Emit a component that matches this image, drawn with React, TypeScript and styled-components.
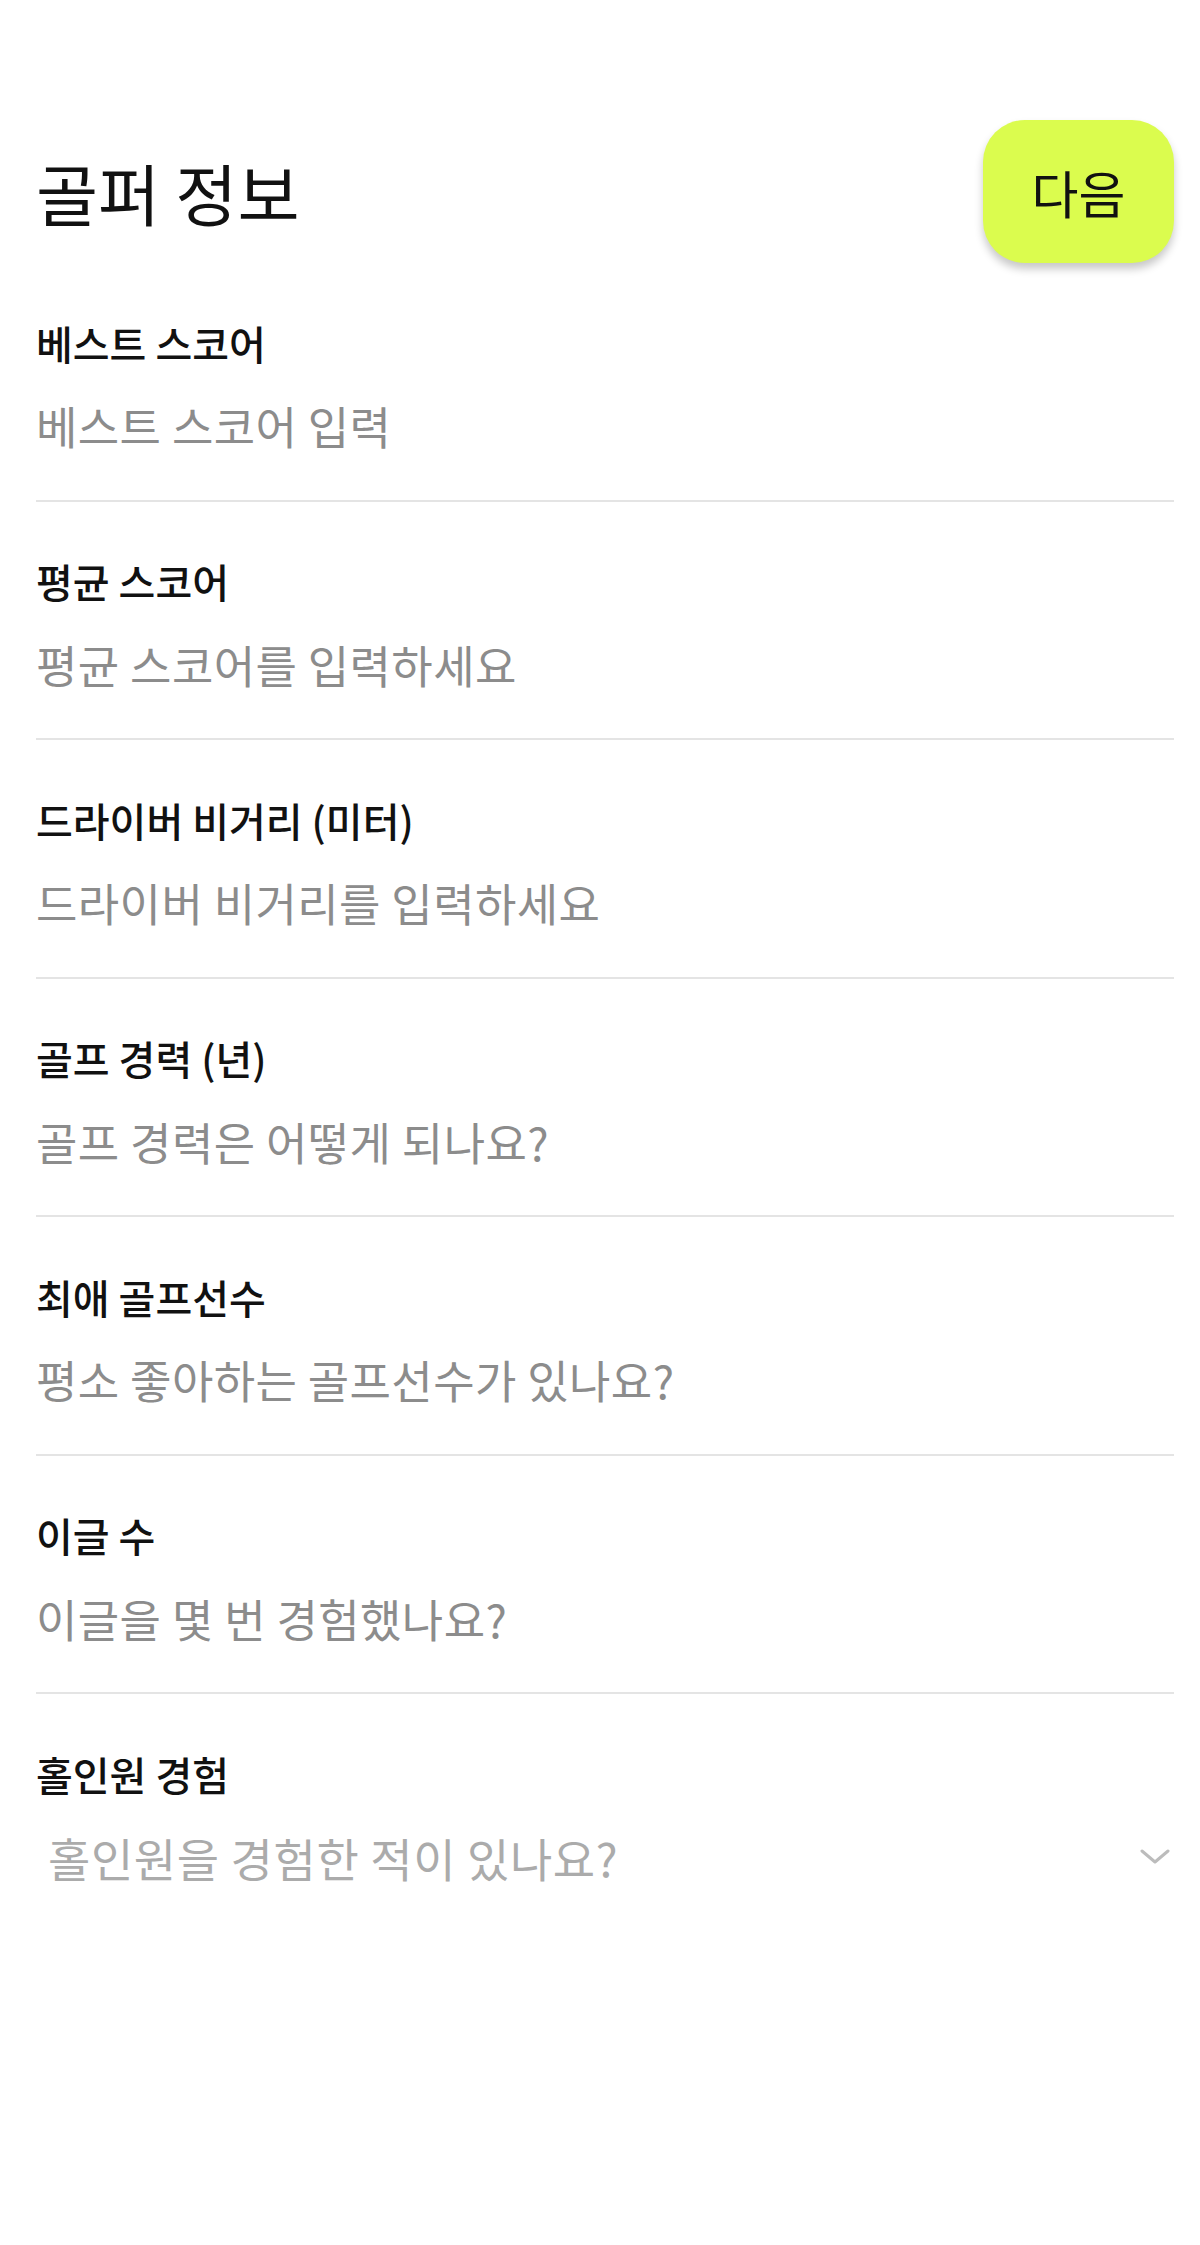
import React from "react";
import styled, { createGlobalStyle } from "styled-components";

const GlobalStyle = createGlobalStyle`
  html, body {
    margin: 0;
    padding: 0;
    background: #ffffff;
  }
  body {
    font-family: "Noto Sans CJK KR", "Noto Sans", sans-serif;
    color: #111111;
  }
  * { box-sizing: border-box; }
`;

const Page = styled.div`
  width: 1200px;
  min-height: 2245px;
  padding: 120px 26px 0 36px;
  background: #ffffff;
`;

const Header = styled.header`
  display: flex;
  align-items: center;
  justify-content: space-between;
  height: 143px;
`;

const Title = styled.h1`
  margin: 0;
  font-size: 67.5px;
  font-weight: 400;
  line-height: 1.2;
  color: #111111;
`;

const NextButton = styled.button`
  width: 191px;
  height: 143px;
  border: none;
  border-radius: 42px;
  background: #dbfc4e;
  box-shadow: 0 6px 9px rgba(0, 0, 0, 0.22);
  font-family: inherit;
  font-size: 51px;
  font-weight: 400;
  color: #111111;
  cursor: pointer;
`;

const Form = styled.form`
  display: flex;
  flex-direction: column;
`;

const Field = styled.div<{ $last?: boolean }>`
  display: flex;
  flex-direction: column;
  gap: 14px;
  padding: 52.5px 0 ${(p) => (p.$last ? "0" : "32px")};
  border-bottom: ${(p) => (p.$last ? "none" : "2px solid #e4e4e4")};
`;

const Label = styled.label`
  display: block;
  height: 54px;
  line-height: 54px;
  font-size: 40px;
  font-weight: 500;
  color: #111111;
`;

const TextInput = styled.input`
  display: block;
  width: 100%;
  height: 84px;
  padding: 0;
  border: none;
  outline: none;
  background: transparent;
  font-family: inherit;
  font-size: 45px;
  letter-spacing: 0.4px;
  color: #111111;
  &::placeholder {
    color: #8c8c8c;
  }
`;

const SelectBox = styled.div`
  display: flex;
  align-items: center;
  justify-content: space-between;
  height: 84px;
  padding: 0 4px 0 12px;
  cursor: pointer;
`;

const SelectPlaceholder = styled.span`
  font-size: 46px;
  letter-spacing: 0.6px;
  color: #ababab;
`;

const Chevron = styled.svg`
  width: 30px;
  height: 16px;
  flex: none;
`;

const fields = [
  { label: "베스트 스코어", placeholder: "베스트 스코어 입력" },
  { label: "평균 스코어", placeholder: "평균 스코어를 입력하세요" },
  { label: "드라이버 비거리 (미터)", placeholder: "드라이버 비거리를 입력하세요" },
  { label: "골프 경력 (년)", placeholder: "골프 경력은 어떻게 되나요?" },
  { label: "최애 골프선수", placeholder: "평소 좋아하는 골프선수가 있나요?" },
  { label: "이글 수", placeholder: "이글을 몇 번 경험했나요?" },
];

export default function App() {
  return (
    <>
      <GlobalStyle />
      <Page>
        <Header>
          <Title>골퍼 정보</Title>
          <NextButton type="button">다음</NextButton>
        </Header>
        <Form onSubmit={(e) => e.preventDefault()}>
          {fields.map((f, i) => (
            <Field key={i}>
              <Label htmlFor={`f${i}`}>{f.label}</Label>
              <TextInput id={`f${i}`} placeholder={f.placeholder} />
            </Field>
          ))}
          <Field $last>
            <Label>홀인원 경험</Label>
            <SelectBox role="button">
              <SelectPlaceholder>홀인원을 경험한 적이 있나요?</SelectPlaceholder>
              <Chevron viewBox="0 0 30 16" fill="none">
                <path
                  d="M2 2 L15 13 L28 2"
                  stroke="#bcbcbc"
                  strokeWidth="3"
                  strokeLinecap="round"
                  strokeLinejoin="round"
                />
              </Chevron>
            </SelectBox>
          </Field>
        </Form>
      </Page>
    </>
  );
}
